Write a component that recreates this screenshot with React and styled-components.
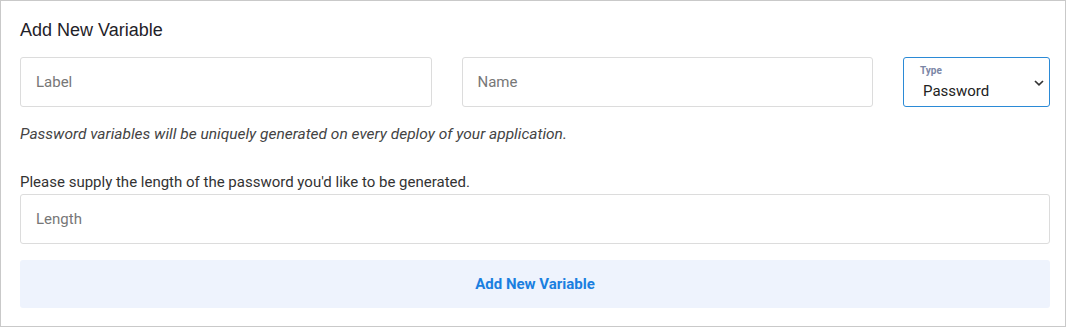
import React from 'react';
import styled, {createGlobalStyle} from 'styled-components';

const GlobalStyle = createGlobalStyle`
  html, body {
    margin: 0;
    padding: 0;
    background: #fff;
  }
  body {
    font-family: Roboto, "Liberation Sans", sans-serif;
    color: #222;
  }
  * {
    box-sizing: border-box;
  }
`

class App extends React.Component {

  render() {
    return (
      <Frame>
        <GlobalStyle />
        <Title>Add New Variable</Title>
        <FieldRow>
          <TextInput placeholder="Label" />
          <TextInput placeholder="Name" />
          <SelectBox>
            <SelectLabel>Type</SelectLabel>
            <Select defaultValue="password">
              <option value="text">Text</option>
              <option value="password">Password</option>
            </Select>
            <Chevron width="12" height="8" viewBox="0 0 12 8">
              <path d="M2 2 L6 5.8 L10 2" fill="none" stroke="#333" strokeWidth="1.7" />
            </Chevron>
          </SelectBox>
        </FieldRow>
        <Hint>Password variables will be uniquely generated on every deploy of your application.</Hint>
        <Prompt>Please supply the length of the password you'd like to be generated.</Prompt>
        <TextInput placeholder="Length" />
        <SubmitButton>Add New Variable</SubmitButton>
      </Frame>
    )
  }
}

const Frame = styled.div`
  display: flex;
  flex-direction: column;
  width: 1066px;
  height: 327px;
  border: 1px solid #c9c9c9;
  padding: 19px 15px 18px 19px;
`

const Title = styled.h2`
  margin: 0;
  font-family: "Liberation Sans", Arial, sans-serif;
  font-size: 18px;
  line-height: 20px;
  font-weight: 400;
  color: #1f2229;
`

const FieldRow = styled.div`
  display: grid;
  grid-template-columns: 1fr 1fr 147px;
  gap: 30px;
  margin-top: 17px;
`

const TextInput = styled.input`
  display: block;
  width: 100%;
  height: 50px;
  border: 1px solid #dcdcdc;
  border-radius: 3px;
  padding: 0 15px;
  font-family: Roboto, "Liberation Sans", sans-serif;
  font-size: 15px;
  color: #222;
  outline: none;
  &::placeholder {
    color: #777;
  }
`

const SelectBox = styled.div`
  position: relative;
  height: 50px;
  border: 1px solid #2b8ad6;
  border-radius: 3px;
`

const SelectLabel = styled.span`
  position: absolute;
  left: 16px;
  top: 7px;
  font-size: 10px;
  font-weight: 700;
  color: #7a86a6;
`

const Select = styled.select`
  appearance: none;
  width: 100%;
  height: 100%;
  border: none;
  background: transparent;
  padding: 17px 0 0 19px;
  font-family: Roboto, "Liberation Sans", sans-serif;
  font-size: 15px;
  color: #222;
  outline: none;
`

const Chevron = styled.svg`
  position: absolute;
  right: 4px;
  top: 21px;
  pointer-events: none;
`

const Hint = styled.p`
  margin: 17px 0 0;
  font-size: 15.5px;
  line-height: 20px;
  font-style: italic;
  color: #444;
`

const Prompt = styled.p`
  margin: 28px 0 2px;
  font-size: 15px;
  line-height: 20px;
  color: #333;
`

const SubmitButton = styled.button`
  margin-top: 16px;
  height: 49px;
  border: none;
  border-radius: 3px;
  background: #eef3fd;
  font-family: Roboto, "Liberation Sans", sans-serif;
  font-size: 15px;
  font-weight: 700;
  color: #1a7fe0;
  cursor: pointer;
`

export default App
